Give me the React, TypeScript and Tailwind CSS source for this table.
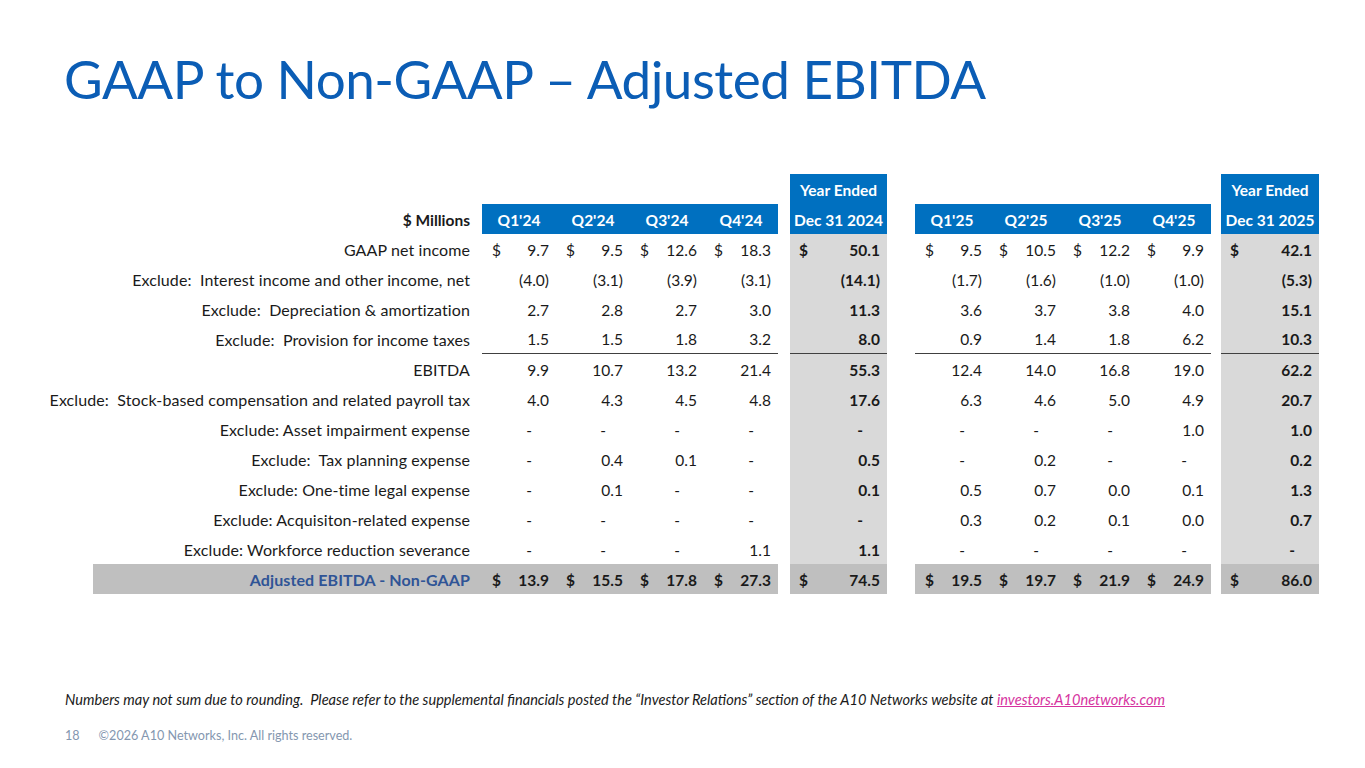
const font = { fontFamily: 'Lato, "Open Sans", sans-serif' }

type Row = {
  label: string
  q24: string[]
  y24: string
  q25: string[]
  y25: string
  dollar?: boolean
  underline?: boolean
  total?: boolean
}

const rows: Row[] = [
  { label: 'GAAP net income', q24: ['9.7', '9.5', '12.6', '18.3'], y24: '50.1', q25: ['9.5', '10.5', '12.2', '9.9'], y25: '42.1', dollar: true },
  { label: 'Exclude:  Interest income and other income, net', q24: ['(4.0)', '(3.1)', '(3.9)', '(3.1)'], y24: '(14.1)', q25: ['(1.7)', '(1.6)', '(1.0)', '(1.0)'], y25: '(5.3)' },
  { label: 'Exclude:  Depreciation & amortization', q24: ['2.7', '2.8', '2.7', '3.0'], y24: '11.3', q25: ['3.6', '3.7', '3.8', '4.0'], y25: '15.1' },
  { label: 'Exclude:  Provision for income taxes', q24: ['1.5', '1.5', '1.8', '3.2'], y24: '8.0', q25: ['0.9', '1.4', '1.8', '6.2'], y25: '10.3', underline: true },
  { label: 'EBITDA', q24: ['9.9', '10.7', '13.2', '21.4'], y24: '55.3', q25: ['12.4', '14.0', '16.8', '19.0'], y25: '62.2' },
  { label: 'Exclude:  Stock-based compensation and related payroll tax', q24: ['4.0', '4.3', '4.5', '4.8'], y24: '17.6', q25: ['6.3', '4.6', '5.0', '4.9'], y25: '20.7' },
  { label: 'Exclude: Asset impairment expense', q24: ['-', '-', '-', '-'], y24: '-', q25: ['-', '-', '-', '1.0'], y25: '1.0' },
  { label: 'Exclude:  Tax planning expense', q24: ['-', '0.4', '0.1', '-'], y24: '0.5', q25: ['-', '0.2', '-', '-'], y25: '0.2' },
  { label: 'Exclude: One-time legal expense', q24: ['-', '0.1', '-', '-'], y24: '0.1', q25: ['0.5', '0.7', '0.0', '0.1'], y25: '1.3' },
  { label: 'Exclude: Acquisiton-related expense', q24: ['-', '-', '-', '-'], y24: '-', q25: ['0.3', '0.2', '0.1', '0.0'], y25: '0.7' },
  { label: 'Exclude: Workforce reduction severance', q24: ['-', '-', '-', '1.1'], y24: '1.1', q25: ['-', '-', '-', '-'], y25: '-' },
  { label: 'Adjusted EBITDA - Non-GAAP', q24: ['13.9', '15.5', '17.8', '27.3'], y24: '74.5', q25: ['19.5', '19.7', '21.9', '24.9'], y25: '86.0', dollar: true, total: true },
]

const grid = 'grid grid-cols-[389px_74px_74px_74px_74px_12px_97px_28px_74px_74px_74px_74px_10px_98px]'

function Num({ value, dollar, year }: { value: string; dollar?: boolean; year?: boolean }) {
  return (
    <div className={`flex h-full items-end justify-between pb-[5px] ${year ? 'pl-[9px]' : 'pl-[10px]'} pr-[7px]`}>
      <span>{dollar ? '$' : ''}</span>
      {value === '-' ? <span className="mr-[17px]">-</span> : <span>{value}</span>}
    </div>
  )
}

function DataRow({ row }: { row: Row }) {
  const band = row.total ? 'bg-[#bfbfbf]' : ''
  const yearBg = row.total ? 'bg-[#bfbfbf]' : 'bg-[#d9d9d9]'
  const line = row.underline ? 'border-b border-[#404040]' : ''
  return (
    <div className={`${grid} h-[30px] text-[15.5px] leading-[18px] text-[#1a1a1a] ${row.total ? 'font-bold' : ''}`}>
      <div className={`flex items-end justify-end whitespace-pre pb-[5px] pr-3 text-[16px] tracking-[0.1px] ${band} ${row.total ? 'text-[#2f5496]' : ''}`}>
        {row.label}
      </div>
      {row.q24.map((v, i) => (
        <div key={i} className={`${band} ${line}`}>
          <Num value={v} dollar={row.dollar} />
        </div>
      ))}
      <div />
      <div className={`${yearBg} font-bold ${line}`}>
        <Num value={row.y24} dollar={row.dollar} year />
      </div>
      <div />
      {row.q25.map((v, i) => (
        <div key={i} className={`${band} ${line}`}>
          <Num value={v} dollar={row.dollar} />
        </div>
      ))}
      <div />
      <div className={`${yearBg} font-bold ${line}`}>
        <Num value={row.y25} dollar={row.dollar} year />
      </div>
    </div>
  )
}

function QHead({ label }: { label: string }) {
  return <div className="flex items-end justify-center bg-[#0070c0] pb-[5px] text-white">{label}</div>
}

export default function App() {
  return (
    <div className="relative h-[768px] w-[1365px] overflow-hidden bg-white" style={font}>
      <h1 className="pl-[64px] pt-[46px] text-[53px] leading-[66px] tracking-[-0.5px] text-[#0b5db5]">
        GAAP to Non-GAAP – Adjusted EBITDA
      </h1>

      <div className="ml-[93px] mt-[62px]">
        <div className={`${grid} h-[30px] text-[15.5px] font-bold leading-[18px]`}>
          <div className="col-span-6" />
          <div className="flex items-end justify-center bg-[#0070c0] pb-[5px] text-white">Year Ended</div>
          <div className="col-span-6" />
          <div className="flex items-end justify-center bg-[#0070c0] pb-[5px] text-white">Year Ended</div>
        </div>
        <div className={`${grid} h-[30px] text-[15.5px] font-bold leading-[18px]`}>
          <div className="flex items-end justify-end pb-[5px] pr-3 text-[#1a1a1a]">$ Millions</div>
          <QHead label="Q1'24" />
          <QHead label="Q2'24" />
          <QHead label="Q3'24" />
          <QHead label="Q4'24" />
          <div />
          <QHead label="Dec 31 2024" />
          <div />
          <QHead label="Q1'25" />
          <QHead label="Q2'25" />
          <QHead label="Q3'25" />
          <QHead label="Q4'25" />
          <div />
          <QHead label="Dec 31 2025" />
        </div>
        {rows.map((r) => (
          <DataRow key={r.label} row={r} />
        ))}
      </div>

      <p className="ml-[65px] mt-[97px] text-[14.6px] italic leading-[17px] text-[#1a1a1a]">
        Numbers may not sum due to rounding.&nbsp; Please refer to the supplemental financials posted the “Investor Relations” section of the A10 Networks website at{' '}
        <span className="text-[#d633a0] underline">investors.A10networks.com</span>
      </p>

      <div className="ml-[65px] mt-[20px] flex gap-[19px] text-[12.6px] leading-[15px] text-[#8497b0]">
        <span>18</span>
        <span>©2026 A10 Networks, Inc. All rights reserved.</span>
      </div>
    </div>
  )
}
